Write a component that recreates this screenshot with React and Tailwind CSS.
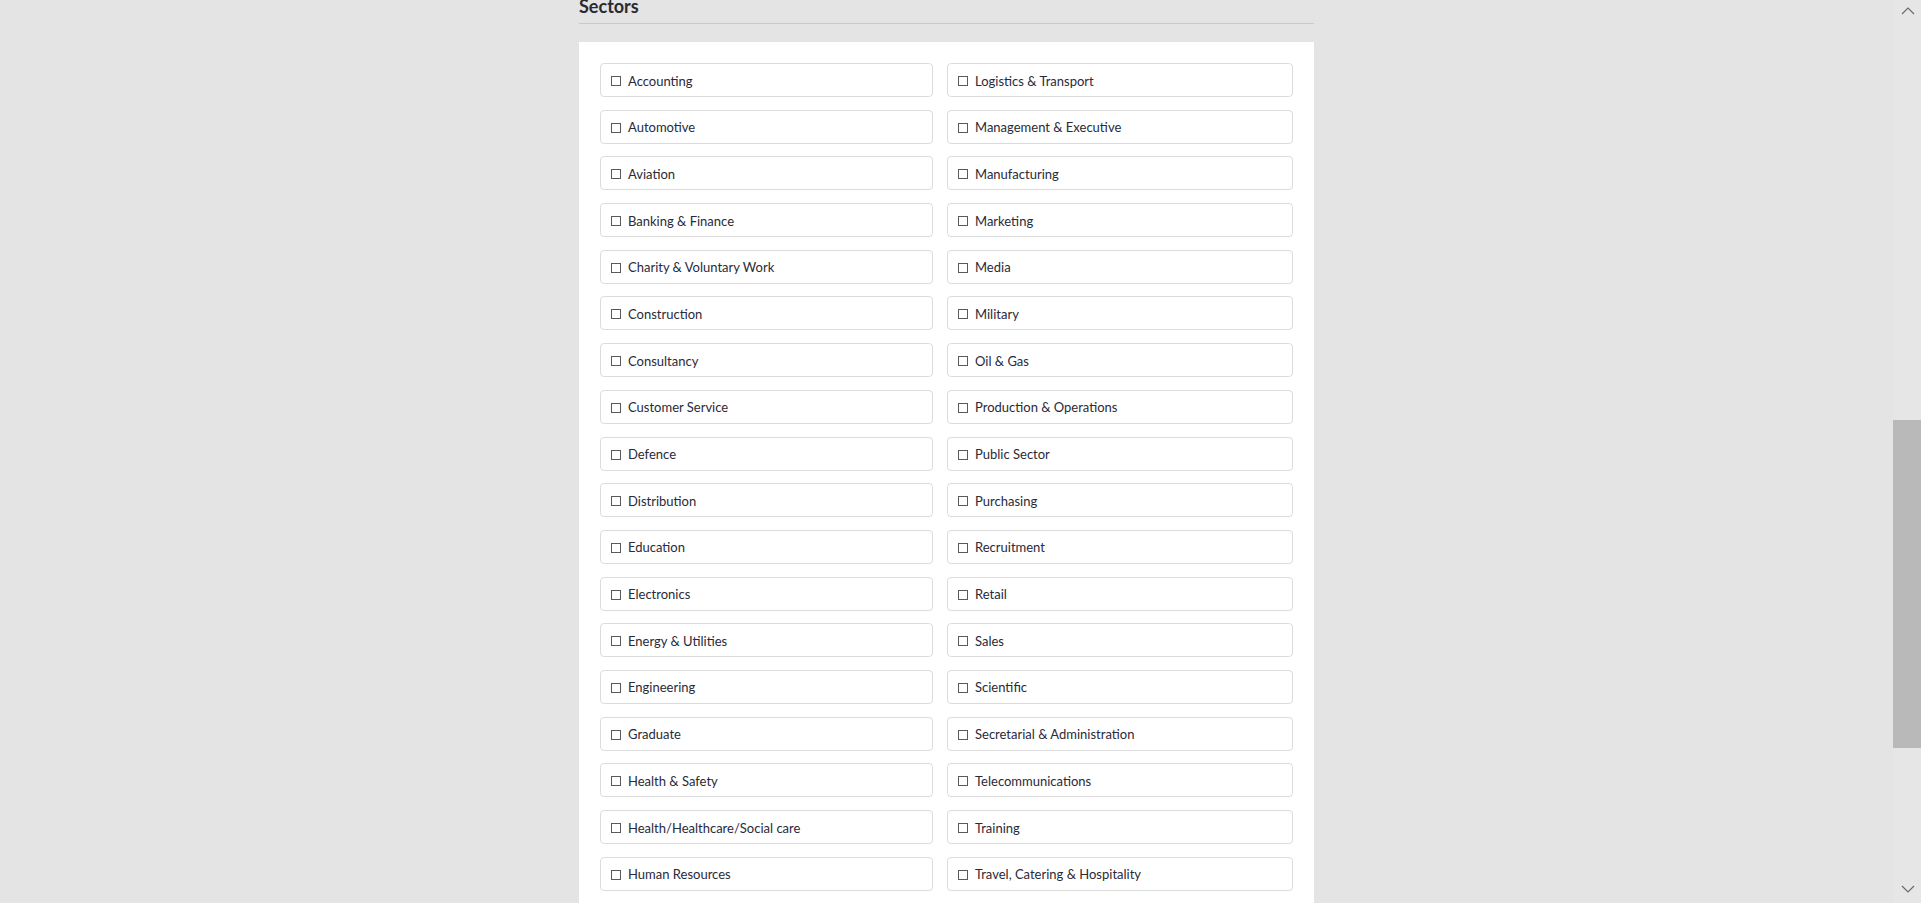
import React from "react";

const left = [
  "Accounting",
  "Automotive",
  "Aviation",
  "Banking & Finance",
  "Charity & Voluntary Work",
  "Construction",
  "Consultancy",
  "Customer Service",
  "Defence",
  "Distribution",
  "Education",
  "Electronics",
  "Energy & Utilities",
  "Engineering",
  "Graduate",
  "Health & Safety",
  "Health/Healthcare/Social care",
  "Human Resources",
];

const right = [
  "Logistics & Transport",
  "Management & Executive",
  "Manufacturing",
  "Marketing",
  "Media",
  "Military",
  "Oil & Gas",
  "Production & Operations",
  "Public Sector",
  "Purchasing",
  "Recruitment",
  "Retail",
  "Sales",
  "Scientific",
  "Secretarial & Administration",
  "Telecommunications",
  "Training",
  "Travel, Catering & Hospitality",
];

function Item({ label }) {
  return (
    <label className="flex h-[34px] items-center rounded-[4px] border border-[#dcdcdc] bg-white pl-[10px] pt-[2px]">
      <span className="mr-[7px] block h-[10px] w-[10px] shrink-0 border border-[#5a5a5a] bg-white" />
      <span className="text-[13px] leading-none text-[#2a2a38]">{label}</span>
    </label>
  );
}

export default function App() {
  const rows = left.map((l, i) => [l, right[i]]);
  return (
    <div
      className="flex h-[903px] w-full overflow-hidden bg-[#e4e4e4]"
      style={{ fontFamily: "Lato, 'Liberation Sans', sans-serif" }}
    >
      <main className="flex-1">
        <div className="mx-auto w-[735px]">
          <div className="-mt-[6px] border-b border-[#c9c9c9] pb-[5px]">
            <h2 className="text-[18px] font-bold leading-[24px] text-[#2a2a30]">Sectors</h2>
          </div>
          <div className="mt-[18px] bg-white pl-[21px] pr-[20px] pt-[21px] pb-[20px]">
            <div className="grid grid-cols-[333px_346px] gap-x-[14px] gap-y-[12.7px]">
              {rows.map(([l, r]) => (
                <React.Fragment key={l}>
                  <Item label={l} />
                  <Item label={r} />
                </React.Fragment>
              ))}
            </div>
          </div>
        </div>
      </main>
      <div className="flex w-[28px] shrink-0 flex-col items-stretch bg-[#e6e6e6]">
        <div className="flex h-[20px] items-center justify-center pl-[2px]">
          <svg width="14" height="9" viewBox="0 0 14 9" fill="none">
            <path d="M1 8L7 2L13 8" stroke="#6a6a6a" strokeWidth="1.2" />
          </svg>
        </div>
        <div className="mt-[400px] h-[328px] bg-[#b9b9b9]" />
        <div className="flex-1" />
        <div className="mb-[8px] flex h-[12px] items-center justify-center pl-[2px]">
          <svg width="14" height="9" viewBox="0 0 14 9" fill="none">
            <path d="M1 1L7 7L13 1" stroke="#6a6a6a" strokeWidth="1.2" />
          </svg>
        </div>
      </div>
    </div>
  );
}
